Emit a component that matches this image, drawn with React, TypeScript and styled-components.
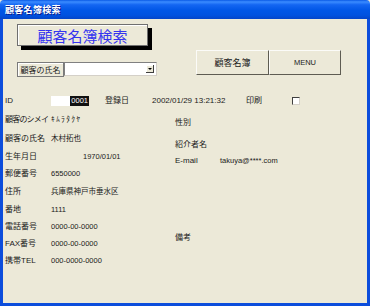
import React from 'react';
import styled, { createGlobalStyle } from 'styled-components';

const GlobalStyle = createGlobalStyle`
    html, body {
        margin: 0;
        padding: 0;
        width: 370px;
        height: 306px;
        overflow: hidden;
        background: #ece9d8;
    }
    body {
        font-family: "Liberation Sans", "Noto Sans CJK JP", sans-serif;
        color: #1a1a1a;
    }
`;

const Window = styled.div`
    width: 370px;
    height: 306px;
    display: flex;
    flex-direction: column;
`;

const TitleBar = styled.div`
    height: 19px;
    flex: none;
    display: flex;
    align-items: center;
    padding-left: 5px;
    border-radius: 4px 4px 0 0;
    background: linear-gradient(to bottom, #0a5ae6 0%, #3b8cff 10%, #1466f2 25%, #0056e6 55%, #0052e0 80%, #0445c8 100%);
    color: #fff;
    font-family: "Noto Sans CJK JP", sans-serif;
    font-size: 9px;
    font-weight: bold;
    text-shadow: 1px 1px 0 #0a1c8a;
    letter-spacing: 0.3px;
`;

const Frame = styled.div`
    flex: 1;
    display: flex;
    flex-direction: column;
    border: 3px solid #0c4ddc;
    border-top: none;
    background: #ece9d8;
    min-height: 0;
`;

const TopSection = styled.div`
    display: flex;
    align-items: flex-end;
    padding: 5px 0 0 14px;
`;

const LeftTop = styled.div`
    width: 143px;
    display: flex;
    flex-direction: column;
    gap: 16px;
`;

const HeadingBox = styled.div`
    box-sizing: border-box;
    width: 131px;
    height: 22px;
    display: flex;
    align-items: center;
    justify-content: center;
    border: 1px solid #6f6f6f;
    box-shadow: inset 1px 1px 0 #ffffff, 4px 4px 0 #000;
    background: #ece9d8;
    color: #3434f0;
    font-family: "Noto Sans CJK JP", sans-serif;
    font-size: 15px;
    line-height: 1;
`;

const ComboRow = styled.div`
    display: flex;
    align-items: flex-start;
    height: 15px;
`;

const RaisedLabel = styled.div`
    box-sizing: border-box;
    width: 47px;
    height: 15px;
    display: flex;
    align-items: center;
    justify-content: center;
    border: 1px solid #7a7a7a;
    box-shadow: inset 1px 1px 0 #fff;
    font-family: "Noto Sans CJK JP", sans-serif;
    font-size: 8px;
    line-height: 1;
`;

const Combo = styled.div`
    box-sizing: border-box;
    width: 93px;
    height: 14px;
    display: flex;
    align-items: center;
    justify-content: flex-end;
    padding-right: 2px;
    background: #fff;
    border-top: 1px solid #808080;
    border-left: 1px solid #808080;
    border-right: 1px solid #d4d0c8;
    border-bottom: 1px solid #d4d0c8;
`;

const ComboArrow = styled.div`
    box-sizing: border-box;
    width: 8px;
    height: 8px;
    display: flex;
    align-items: center;
    justify-content: center;
    background: #ece9d8;
    border-right: 1px solid #404040;
    border-bottom: 1px solid #404040;
    box-shadow: inset 1px 1px 0 #fff;

    &::after {
        content: "";
        border-left: 2px solid transparent;
        border-right: 2px solid transparent;
        border-top: 2px solid #000;
    }
`;

const ButtonGroup = styled.div`
    display: flex;
    margin-left: 36px;
    margin-bottom: 2px;
`;

const FormButton = styled.div<{ $width: number; $latin?: boolean }>`
    box-sizing: border-box;
    width: ${({ $width }) => $width}px;
    height: 25px;
    display: flex;
    align-items: center;
    justify-content: center;
    background: #ece9d8;
    border-top: 1px solid #fbfbf8;
    border-left: 1px solid #fbfbf8;
    border-right: 1px solid #5e5c52;
    border-bottom: 1px solid #5e5c52;
    font-family: ${({ $latin }) => ($latin ? '"Liberation Sans", sans-serif' : '"Noto Sans CJK JP", sans-serif')};
    font-size: ${({ $latin }) => ($latin ? '7.5px' : '9px')};
    color: #222;
    line-height: 1;
`;

const IdRow = styled.div`
    display: flex;
    align-items: center;
    height: 18px;
    margin-top: 15px;
    padding-left: 2px;
`;

const Cell = styled.div<{ $width: number }>`
    width: ${({ $width }) => $width}px;
    flex: none;
    font-size: 8px;
    line-height: 1;
    white-space: nowrap;
`;

const IdBox = styled.div`
    width: 38px;
    height: 10px;
    margin-right: 16px;
    display: flex;
    justify-content: flex-end;
    align-items: center;
    background: #fff;
`;

const Selected = styled.span`
    background: #111;
    color: #fff;
    font-size: 7.5px;
    line-height: 10px;
    padding: 0 1px;
`;

const Check = styled.div`
    box-sizing: border-box;
    width: 8px;
    height: 8px;
    background: #fff;
    border-top: 1px solid #404040;
    border-left: 1px solid #404040;
    border-right: 1px solid #d4d0c8;
    border-bottom: 1px solid #d4d0c8;
`;

const Fields = styled.div`
    display: flex;
    padding-left: 2px;
`;

const LeftFields = styled.div`
    width: 170px;
    display: flex;
    flex-direction: column;
`;

const RightFields = styled.div`
    display: flex;
    flex-direction: column;
`;

const FieldRow = styled.div<{ $height: number; $top?: number }>`
    display: flex;
    align-items: center;
    height: ${({ $height }) => $height}px;
    margin-top: ${({ $top }) => $top ?? 0}px;
`;

const Label = styled.div<{ $width: number; $tight?: boolean }>`
    width: ${({ $width }) => $width}px;
    flex: none;
    font-size: 8px;
    line-height: 1;
    white-space: nowrap;
    letter-spacing: ${({ $tight }) => ($tight ? '-0.8px' : '0')};
`;

const Value = styled.div<{ $indent?: number; $spread?: number }>`
    padding-left: ${({ $indent }) => $indent ?? 0}px;
    font-size: 7.5px;
    line-height: 1;
    white-space: nowrap;
    letter-spacing: ${({ $spread }) => $spread ?? 0}px;
`;

const leftRows = [
    { label: '顧客のシメイ', value: 'ｷﾑﾗﾀｸﾔ', h: 19, tight: true, spread: 1.3 },
    { label: '顧客の氏名', value: '木村拓也', h: 19 },
    { label: '生年月日', value: '1970/01/01', h: 17, indent: 32 },
    { label: '郵便番号', value: '6550000', h: 18 },
    { label: '住所', value: '兵庫県神戸市垂水区', h: 18 },
    { label: '番地', value: '1111', h: 17 },
    { label: '電話番号', value: '0000-00-0000', h: 17 },
    { label: 'FAX番号', value: '0000-00-0000', h: 17 },
    { label: '携帯TEL', value: '000-0000-0000', h: 17 },
];

const rightRows = [
    { label: '性別', top: 6 },
    { label: '紹介者名', top: 8 },
    { label: 'E-mail', value: 'takuya@****.com', top: 2 },
    { label: '備考', top: 63 },
];

const App = () => {
    return (
        <>
            <GlobalStyle />
            <Window>
                <TitleBar>顧客名簿検索</TitleBar>
                <Frame>
                    <TopSection>
                        <LeftTop>
                            <HeadingBox>顧客名簿検索</HeadingBox>
                            <ComboRow>
                                <RaisedLabel>顧客の氏名</RaisedLabel>
                                <Combo>
                                    <ComboArrow />
                                </Combo>
                            </ComboRow>
                        </LeftTop>
                        <ButtonGroup>
                            <FormButton $width={73}>顧客名簿</FormButton>
                            <FormButton $width={72} $latin>MENU</FormButton>
                        </ButtonGroup>
                    </TopSection>

                    <IdRow>
                        <Cell $width={46}>ID</Cell>
                        <IdBox>
                            <Selected>0001</Selected>
                        </IdBox>
                        <Cell $width={47}>登録日</Cell>
                        <Cell $width={94}>2002/01/29 13:21:32</Cell>
                        <Cell $width={46}>印刷</Cell>
                        <Check />
                    </IdRow>

                    <Fields>
                        <LeftFields>
                            {leftRows.map((row) => (
                                <FieldRow key={row.label} $height={row.h}>
                                    <Label $width={46} $tight={row.tight}>{row.label}</Label>
                                    <Value $indent={row.indent} $spread={row.spread}>{row.value}</Value>
                                </FieldRow>
                            ))}
                        </LeftFields>
                        <RightFields>
                            {rightRows.map((row) => (
                                <FieldRow key={row.label} $height={14} $top={row.top}>
                                    <Label $width={45}>{row.label}</Label>
                                    {row.value && <Value>{row.value}</Value>}
                                </FieldRow>
                            ))}
                        </RightFields>
                    </Fields>
                </Frame>
            </Window>
        </>
    );
};

export default App;
